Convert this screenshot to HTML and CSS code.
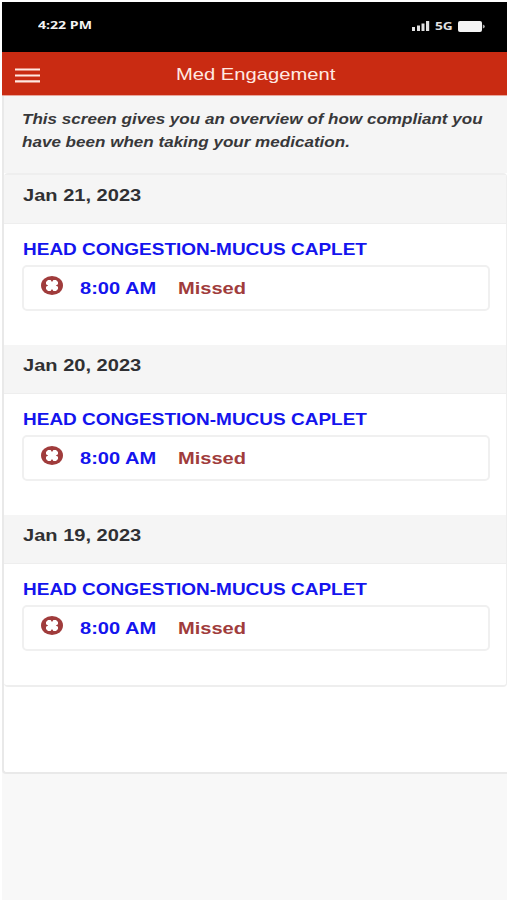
FILE: index.html
```
<!DOCTYPE html>
<html lang="en">
<head>
<meta charset="utf-8">
<title>Med Engagement</title>
<link rel="stylesheet" href="styles.css">
</head>
<body>
<svg class="defs" width="0" height="0">
  <symbol id="missed" viewBox="0 0 22 19">
    <ellipse cx="11" cy="9.5" rx="11" ry="9.4" fill="#a03c3c"/>
    <path d="M7 3.9L9.6 3.9L11 6L12.4 3.9L15 3.9L17 6L17 8.2L14.8 9.5L17 10.8L17 13L15 15.1L12.4 15.1L11 13L9.6 15.1L7 15.1L5 13L5 10.8L7.2 9.5L5 8.2L5 6Z" fill="#fff"/>
  </symbol>
</svg>
<div class="phone">
  <div class="status">
    <span class="clock wide">4:22 PM</span>
    <span class="signal">
      <svg width="18" height="10" viewBox="0 0 18 10" fill="#e2e2e2"><path d="M0 6h3v4H0zM5 4.5h3V10H5zM9.5 2.5h3V10h-3zM14 0h3.2v10H14z"/></svg>
      <span class="network wide">5G</span>
      <svg width="27" height="11" viewBox="0 0 27 11" fill="#f4f4f4"><rect x="0" y="0" width="24" height="11" rx="2"/><path d="M24.8 3.5q2 .3 2 2t-2 2z" fill="#aaa"/></svg>
    </span>
  </div>
  <header class="bar">
    <svg class="menu" width="25" height="15" viewBox="0 0 25 15"><path d="M0 1.5h25M0 7.5h25M0 13.3h25" stroke="#ffe9e2" stroke-width="2.2"/></svg>
    <h1 class="title wide">Med Engagement</h1>
  </header>
  <main class="content">
    <p class="intro"><span class="wide">This screen gives you an overview of how compliant you</span><span class="wide">have been when taking your medication.</span></p>
    <div class="days">
      <section class="day">
        <h2 class="date"><span class="wide">Jan 21, 2023</span></h2>
        <h3 class="drug"><span class="wide">HEAD CONGESTION-MUCUS CAPLET</span></h3>
        <div class="dose"><svg class="icon" width="22" height="19"><use href="#missed"/></svg><span class="time wide">8:00 AM</span><span class="state wide">Missed</span></div>
      </section>
      <section class="day">
        <h2 class="date"><span class="wide">Jan 20, 2023</span></h2>
        <h3 class="drug"><span class="wide">HEAD CONGESTION-MUCUS CAPLET</span></h3>
        <div class="dose"><svg class="icon" width="22" height="19"><use href="#missed"/></svg><span class="time wide">8:00 AM</span><span class="state wide">Missed</span></div>
      </section>
      <section class="day">
        <h2 class="date"><span class="wide">Jan 19, 2023</span></h2>
        <h3 class="drug"><span class="wide">HEAD CONGESTION-MUCUS CAPLET</span></h3>
        <div class="dose"><svg class="icon" width="22" height="19"><use href="#missed"/></svg><span class="time wide">8:00 AM</span><span class="state wide">Missed</span></div>
      </section>
    </div>
  </main>
</div>
</body>
</html>
```

FILE: styles.css
```
* { box-sizing: border-box; margin: 0; }
body {
  height: 900px;
  overflow: hidden;
  background: #fff;
  font-family: "Liberation Sans", Arial, sans-serif;
}
.defs { display: block; }
.phone {
  height: 898px;
  margin: 2px 0 0 2px;
  background: #f8f8f8;
}
.wide {
  display: block;
  width: max-content;
  white-space: nowrap;
  transform: scaleX(1.18);
  transform-origin: left center;
}
.status {
  height: 50px;
  padding: 0 22px 3px 36px;
  display: flex;
  align-items: center;
  justify-content: space-between;
  background: #000;
  color: #f4f4f4;
  font: bold 11px/14px "Open Sans", sans-serif;
}
.clock { transform: scaleX(1.28); margin-top: -2px; }
.signal { display: flex; align-items: center; padding-top: 1px; }
.network { margin: 0 9px 0 5px; color: #e2e2e2; transform: scaleX(1.25); }
.bar {
  height: 44px;
  padding-left: 13px;
  display: flex;
  align-items: center;
  background: #c92b12;
  border-bottom: 1px solid #e8a69b;
  color: #ffe9e2;
}
.menu { margin-top: 3px; }
.title { margin-left: 136px; font-size: 17px; font-weight: 400; line-height: 20px; padding-top: 2px; transform: scaleX(1.187); }
.content {
  height: 678px;
  background: #fff;
  border: solid #e9e9e9;
  border-width: 0 0 2px 2px;
  border-radius: 0 0 0 4px;
}
.intro {
  height: 77px;
  padding: 12px 0 0 18px;
  background: #f5f5f5;
  color: #38383a;
  font: italic bold 14.4px/23px "Liberation Sans", Arial, sans-serif;
}
.intro .wide { transform: scaleX(1.185); }
.days {
  height: 514px;
  border: solid #eee;
  border-width: 2px 1px 2px 0;
  border-radius: 4px;
}
.day { height: 170px; }
.date {
  height: 49px;
  padding: 10px 0 0 19px;
  background: #f5f5f5;
  border-bottom: 1px solid #eee;
  color: #303033;
  font-size: 17px;
  line-height: 22px;
}
.drug {
  padding: 15px 0 0 19px;
  color: #1414ee;
  font-size: 16.1px;
  line-height: 20px;
}
.dose {
  width: 468px;
  height: 46px;
  margin: 6px 0 0 18px;
  padding-left: 17px;
  display: flex;
  align-items: center;
  border: 2px solid #f0f0f0;
  border-radius: 5px;
  font-size: 17px;
  font-weight: bold;
  line-height: 20px;
}
.icon { margin-bottom: 5px; }
.time { margin-left: 17px; padding-top: 1px; color: #1414ee; }
.state { margin-left: 33px; padding-top: 1px; color: #a03c3c; }
```
